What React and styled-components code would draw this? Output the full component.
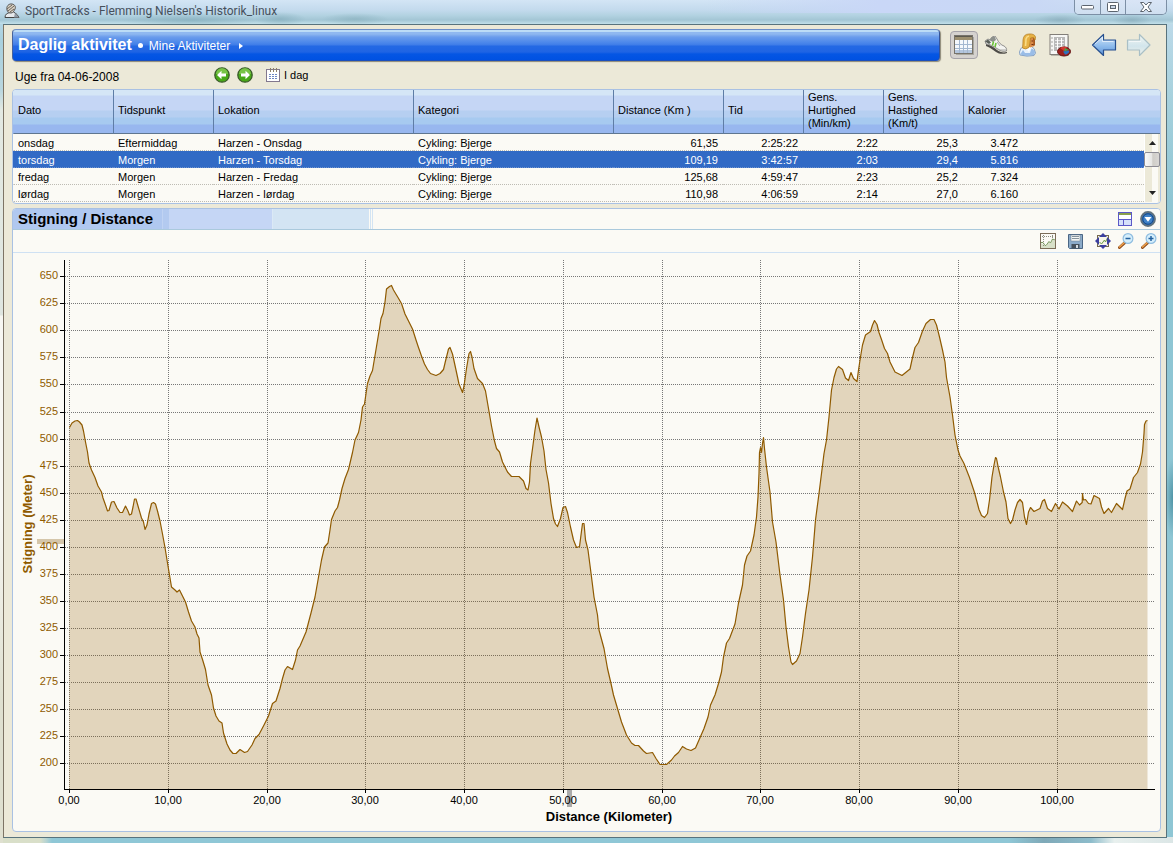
import React from "react";
import styled, { createGlobalStyle } from "styled-components";

const GlobalStyle = createGlobalStyle`
  * { box-sizing: border-box; }
  body {
    margin: 0;
    background: #8fc5d3;
    font-family: "Liberation Sans", Arial, sans-serif;
    font-size: 11px;
    color: #000;
  }
  button { font: inherit; color: inherit; }
  svg { display: block; }
`;

const Window = styled.main`
  display: flex;
  flex-direction: column;
  min-height: 100vh;
  padding: 0 6px 5px 3px;
  background:
    radial-gradient(ellipse 8px 40px at 100% 498px, #4f94a6, transparent),
    linear-gradient(#c3dcec, #a8d0de 40px, #b9d6df 90px, #e3e9e2 110px, #dfe6e0 315px, #f7f7f2 316px, #f7f7f2 515px, #dfe0d0 700px) left / 3px 100% no-repeat,
    linear-gradient(90deg, #d9dfc9 40px, #b8d4d2 46px, #8fc7d6 52px, #8fc7d6 86%, #7fa9b8 89%, #8dbccb 93%, #e8f0ee 95%, #dbe6e6) bottom / 100% 6px no-repeat,
    linear-gradient(#c3dcec, #a9d2de 90px, #8ec6d4 200px);
`;

const TitleBar = styled.header`
  display: flex;
  align-items: flex-start;
  justify-content: space-between;
  height: 24px;
  margin: 0 -6px 0 -3px;
  background:
    radial-gradient(ellipse 26px 7px at 280px 19px, #7fa9b799, transparent),
    radial-gradient(ellipse 70px 7px at 190px 20px, #7fa9b799, transparent),
    radial-gradient(ellipse 34px 6px at 355px 19px, #86aebb99, transparent),
    radial-gradient(ellipse 26px 6px at 1060px 20px, #7fa3b188, transparent),
    radial-gradient(ellipse 20px 6px at 1132px 20px, #7fa3b188, transparent),
    linear-gradient(90deg, transparent 60%, #c9d7f7 75%, #c9d8f5 88%, transparent) top / 100% 13px no-repeat,
    linear-gradient(#d3e5f5, #c3daed 10px, #b4d3e2 15px, #a3c6d5 20px, #c2e0ea);
`;

const TitleText = styled.h1`
  display: flex;
  align-items: center;
  gap: 5px;
  height: 22px;
  margin: 0;
  padding-left: 4px;
  font: 400 12px Roboto, "Noto Sans", sans-serif;
  color: #46505c;
`;

const WindowButtons = styled.div`
  display: flex;
  height: 15px;
  margin-right: 6px;
  border: 1px solid #7c8fa5;
  border-top: 0;
  border-radius: 0 0 5px 5px;
  overflow: hidden;
`;

const WindowButton = styled.button`
  display: grid;
  place-items: center;
  width: ${(p) => p.$width};
  padding: 0;
  border: 0;
  border-left: ${(p) => (p.$first ? "0" : "1px solid #7c8fa5")};
  background: linear-gradient(#d9e5f6, #cfdff0);
`;

const Frame = styled.div`
  flex: 1;
  display: flex;
  flex-direction: column;
  padding: 4px 5px 5px 8px;
  border: 1px solid #58737d;
  border-left-color: #7d7465;
  background: #ece9d8;
`;

const Top = styled.div`
  display: flex;
  align-items: center;
`;

const Banner = styled.div`
  flex: 1;
  display: flex;
  align-items: center;
  height: 32px;
  padding: 0 5px;
  border: 1px solid #3b5fae;
  border-color: #6d8fc8 #34539a #1b4fbd #47639c;
  border-radius: 4px;
  box-shadow: 1px 1px 1px #8c8877;
  background: linear-gradient(#bcdcf6 0 2px, #8fb8f0 2px 4px, #6a9cec 7px, #4a86ea 13px, #3f7ce8 15px, #2469e4 16px, #1f64e4 22px, #0556e4 24px, #0051e2);
  color: #fff;
`;

const BannerTitle = styled.h2`
  margin: 0;
  font-size: 16px;
  line-height: 20px;
`;

const Bullet = styled.span`
  width: 5px;
  height: 5px;
  margin: 0 6px;
  border-radius: 50%;
  background: #fff;
`;

const BannerLink = styled.a`
  display: flex;
  align-items: center;
  gap: 9px;
  padding-top: 2px;
  font-size: 12px;
  line-height: 20px;
  color: #fff;
  text-decoration: none;
`;

const Tools = styled.nav`
  display: flex;
  gap: 4px;
  padding: 0 8px 0 10px;
`;

const ToolPair = styled.div`
  display: flex;
  gap: 7px;
  margin-left: 12px;
`;

const ToolButton = styled.button`
  display: grid;
  place-items: center;
  width: 28px;
  height: 28px;
  padding: 0;
  border: 1px solid ${(p) => (p.$active ? "#a5a2a8" : "transparent")};
  border-radius: 4px;
  background: ${(p) => (p.$active ? "#d5d2cf" : "transparent")};
`;

const WeekBar = styled.div`
  display: flex;
  align-items: center;
  height: 28px;
  padding-left: 3px;
`;

const WeekLabel = styled.span`
  flex: 0 0 199px;
  padding-top: 3px;
  font-size: 12px;
`;

const WeekButton = styled.button`
  display: flex;
  align-items: center;
  gap: 4px;
  margin-right: ${(p) => p.$after || "0"};
  padding: 0;
  border: 0;
  background: none;
`;

const Panel = styled.section`
  border: 1px solid #a9c1e3;
  border-radius: 4px;
  background: #fbfaf5;
  overflow: hidden;
`;

const TablePanel = styled(Panel)`
  margin-bottom: 4px;
  padding-bottom: 1px;
`;

const Table = styled.table`
  width: 100%;
  table-layout: fixed;
  border-collapse: separate;
  border-spacing: 0;
`;

const HeadCell = styled.th`
  height: 44px;
  padding: 0 4px 2px;
  border-left: 1px solid ${(p) => (p.$first ? "transparent" : "#5f7da6")};
  border-bottom: 1px solid #5f7690;
  font-weight: 400;
  line-height: 13px;
  text-align: left;
`;

const HeadRow = styled.tr`
  background: linear-gradient(#d5e6f6 0 5px, #c5d6f5 6px 20px, #b6cff1 21px 27px, #a7caf0 28px 34px, #98b7ef 35px);
`;

const Cell = styled.td`
  height: 17px;
  padding: 2px 5px 0 4px;
  border-left: 1px solid transparent;
  border-bottom: 1px dotted ${(p) => (p.$selected ? "#6f92cf" : "#bdbbb3")};
  background: ${(p) => (p.$selected ? "#316ac5" : "#fbfaf5")};
  color: ${(p) => (p.$selected ? "#fff" : "#000")};
  line-height: 14px;
  text-align: ${(p) => (p.$right ? "right" : "left")};
  white-space: nowrap;
`;

const ScrollCell = styled.td`
  height: 68px;
  padding: 0;
  vertical-align: top;
`;

const ScrollBar = styled.div`
  display: flex;
  flex-direction: column;
  height: 68px;
  background: linear-gradient(90deg, #fff 0 1px, #ece9d8 1px 8px, #fbfaf5 8px 14px, #ece9d8 14px);
`;

const ScrollArrow = styled.button`
  display: grid;
  place-items: center;
  height: 18px;
  padding: 0;
  border: 0;
  background: none;
`;

const ScrollThumb = styled.button`
  height: 15px;
  margin-bottom: auto;
  padding: 0;
  border: 1px solid #8d8c94;
  border-radius: 2px;
  background: linear-gradient(90deg, #fafafa, #e6e6e4 50%, #cfcdc8 55%, #d9d7d4);
`;

const PanelHead = styled.div`
  display: flex;
  align-items: center;
  justify-content: space-between;
  height: 21px;
  padding: 0 4px 0 5px;
  border-bottom: 1px solid #aac9dc;
  background: linear-gradient(90deg, #b0c8f0 149px, #c0d3f3 149px 150px, #b3caf0 150px 156px, #c5d6f5 156px 259px, #dbe9f6 259px 260px, #d3e4f3 260px 356px, #fbfaf5 356px 357px, #d3e4f3 357px 358px, #fbfaf5 358px 359px, #d3e4f3 359px 360px, #fbfaf5 360px);
`;

const PanelTitle = styled.h2`
  margin: 0;
  font-size: 15px;
  line-height: 20px;
`;

const IconGroup = styled.div`
  display: flex;
  align-items: center;
  gap: ${(p) => p.$gap};
`;

const ChartTools = styled.div`
  display: flex;
  justify-content: flex-end;
  gap: 7px;
  height: 23px;
  padding-right: 3px;
  border-bottom: 1px solid #cfe1f3;
`;

const IconButton = styled.button`
  padding: 0;
  border: 0;
  background: none;
`;

const Chart = styled.svg`
  width: 100%;
  height: auto;
  font-size: 11px;
`;

const BROWN = "#8f5a00";

/* ---------- window and navigation icons ---------- */

const AppIcon = () => (
  <svg width="16" height="16" viewBox="0 0 16 16">
    <path d="M1 14.500c0-3 2-4.500 5-5l3-1 4 3 2 3z" fill="#e6e9ec" stroke="#444" strokeWidth="1" />
    <path d="M3 7c-1-4 2-6.500 5-6s4 3 3 5-2 4-4 4-3.500-1-4-3z" fill="#d9d2c6" stroke="#555" strokeWidth="1" />
    <path d="M3 6l5-4M4 8l6-5M6 9l4-3" stroke="#6b6258" strokeWidth="1" />
    <path d="M11 10l4 4.500h-5z" fill="#8f9aa5" />
  </svg>
);

const MinimizeIcon = () => (
  <svg width="13" height="6" viewBox="0 0 13 6"><rect x=".5" y="1.500" width="12" height="3.500" rx="1" fill="#fff" stroke="#5c646e" /></svg>
);
const MaximizeIcon = () => (
  <svg width="12" height="10" viewBox="0 0 12 10">
    <rect x=".5" y=".5" width="11" height="9" rx="1" fill="#fff" stroke="#5c646e" />
    <rect x="3.500" y="3.500" width="5" height="3" fill="#c9d7e8" stroke="#5c646e" />
  </svg>
);
const CloseIcon = () => (
  <svg width="12" height="10" viewBox="0 0 12 10">
    <path d="M.5.5h3.200L6 3 8.300.5h3.200L8 5l3.500 4.500H8.300L6 7 3.700 9.500H.5L4 5z" fill="#fff" stroke="#5c646e" />
  </svg>
);

const CalendarIcon = () => (
  <svg width="20" height="20" viewBox="0 0 20 20">
    <rect x="2" y="2" width="18" height="18" fill="#a9a79f" />
    <rect x=".5" y=".5" width="18" height="18" fill="#f5f8fc" stroke="#77736a" />
    <rect x="1" y="1" width="17" height="4" fill="#9c8f6f" />
    <rect x="1" y="1" width="17" height="1" fill="#5d5a50" />
    <rect x="1" y="15" width="17" height="3" fill="#b4c6de" />
    <path d="M1 9.500h17M1 13.500h17M5.500 5v13M9.500 5v13M13.500 5v13" stroke="#a3b7d0" />
  </svg>
);

const ShoeIcon = () => (
  <svg width="24" height="18" viewBox="0 0 24 18">
    <path d="M2 8c4 1 8 3 11 6 3 2 6 3 10 2v1c-4 1.500-8 1-11-1-4-3-7-5-10-6z" fill="#4d4b47" />
    <path d="M1 5l3-2 2 1 2-3 3-1 2 3c2 4 4 6 7 7 2 1 3 3 2.500 5-3 1-6 0-9-2C9 10 6 8 2 8z" fill="#f4f4f1" stroke="#777" strokeWidth=".8" />
    <path d="M5 4l3-3 3 0 1 3-3 2z" fill="#8d918c" />
    <path d="M1 5.500l3-2 3 3-2 1.500z" fill="#5a605a" />
    <path d="M9.500 5.500l-1 4M12 7l-1 4" stroke="#69c435" strokeWidth="1.600" />
    <path d="M13 6l3 4M12 12l4 2 6 0" fill="none" stroke="#a9a9a4" />
  </svg>
);

const PersonIcon = () => (
  <svg width="20" height="24" viewBox="0 0 20 24">
    <path d="M2 22L1.500 19Q2 14.500 6 13.500L13 13Q17 15 17.500 20L16 22.500Q9 24 2 22Z" fill="#e9f2fb" stroke="#88a3c4" />
    <path d="M2.500 21Q4 22.500 9 22.800L16 22L17 19Q15 15.500 13.500 15.500L12 20L7 20L5 17Z" fill="#7fabe0" opacity=".75" />
    <path d="M7 14L11 19L13 14Z" fill="#fff" />
    <path d="M10 4L16.500 4L17 8.500L16 13L12.500 14.500L9 12Z" fill="#d98a48" />
    <path d="M15 5L17 5L17 12L15.500 13.500Z" fill="#a9581f" />
    <path d="M4.500 15Q5 11 5 7Q5.500 1 11 1Q16.500 .5 17.500 4Q17.500 6 17 7L15.500 4.500L12.500 5Q12 11 11 14.500Q7.500 17 4.500 15Z" fill="#e6b145" stroke="#b07a1e" strokeWidth=".7" />
    <path d="M7.500 13Q8 8 8 6Q8.500 3.500 11 3" fill="none" stroke="#f9dc86" strokeWidth="1.600" />
    <path d="M13.500 8H15M13.500 11.500H15.500" stroke="#71310f" />
  </svg>
);

const ReportIcon = () => (
  <svg width="22" height="24" viewBox="0 0 22 24">
    <rect x="2" y="3" width="18" height="20" fill="#bbb8ab" />
    <rect x="1" y="1.500" width="18" height="20" fill="#f7f7f5" stroke="#827e78" />
    <rect x="5" y="4" width="11" height="14" fill="#b9b9b9" />
    <path d="M6 7.500h9M6 10.500h9M6 13.500h9" stroke="#e9e9e9" />
    <path d="M8.500 5v13M12.500 5v13" stroke="#fff" />
    <path d="M2.500 5h1M2.500 9h1M2.500 13h1M2.500 17h1" stroke="#555" />
    <ellipse cx="15" cy="18.500" rx="6.500" ry="4.500" fill="#9e1f1d" stroke="#641211" />
    <path d="M15 18l-4-3c2-1.500 5-1.500 7-1z" fill="#d43a31" />
    <path d="M15 18.500l1-3.500 4 2z" fill="#4ba34c" />
    <path d="M14 18.500l6-1c1 2-2 4-4 4z" fill="#2d71bd" />
  </svg>
);

const Arrow = ({ forward }) => (
  <svg width="26" height="24" viewBox="0 0 26 24">
    <defs>
      <linearGradient id={forward ? "fwd" : "back"} x1="0" y1="0" x2="0" y2="1">
        <stop offset="0" stopColor={forward ? "#f3f7f2" : "#d8ebfb"} />
        <stop offset=".55" stopColor={forward ? "#d2e5ec" : "#8fbcec"} />
        <stop offset="1" stopColor={forward ? "#edf0e8" : "#5c93d8"} />
      </linearGradient>
    </defs>
    <path
      d={forward ? "M24 12L13.500 1.500V7H1.500v10h12v5.500z" : "M1.500 12L12.500 1.500V7h12v10h-12v5.500z"}
      fill={forward ? "url(#fwd)" : "url(#back)"}
      stroke={forward ? "#a9bfc6" : "#27508f"}
      strokeWidth="1.200"
      strokeLinejoin="round"
    />
    <path d={forward ? "M3 8.500h12" : "M4 11L11.500 4v4.500h11"} fill="none" stroke="#fff" opacity=".6" />
  </svg>
);

const GreenArrow = ({ forward }) => (
  <svg width="16" height="16" viewBox="0 0 16 16">
    <circle cx="8" cy="8" r="7.200" fill="#48a818" stroke="#3a5b2b" strokeWidth="1.300" />
    <path d="M2 7a6 6 0 0 1 12 0z" fill="#8cd05a" opacity=".7" />
    <path d={forward ? "M13 8L8.500 3.800V6.500H4v3h4.500v2.700z" : "M3 8l4.500-4.200V6.500H12v3H7.500v2.700z"} fill="#fff" />
  </svg>
);

const DayIcon = () => (
  <svg width="14" height="14" viewBox="0 0 14 14">
    <rect x=".5" y="1.500" width="13" height="12" fill="#fff" stroke="#82788e" />
    <path d="M4.500 0v4M7.500 0v4M10.500 0v4" stroke="#8d8168" />
    <path d="M3 6.500h9M3 8.500h9M3 10.500h9" stroke="#6f88c4" strokeDasharray="2 1" />
  </svg>
);

const Triangle = ({ down }) => (
  <svg width="7" height="4" viewBox="0 0 7 4"><path d={down ? "M0 0h7L3.500 4z" : "M0 4h7L3.500 0z"} fill="#222" /></svg>
);

/* ---------- chart panel icons ---------- */

const LayoutIcon = () => (
  <svg width="14" height="14" viewBox="0 0 14 14">
    <rect x=".5" y=".5" width="13" height="13" fill="#fff" stroke="#5b58c8" />
    <rect x="1" y="1" width="12" height="2" fill="#8aa04c" />
    <rect x="1" y="8" width="12" height="5" fill="#d5e0fa" />
    <path d="M1 7.500h12M5.500 8v5" stroke="#5b58c8" />
  </svg>
);
const MenuIcon = () => (
  <svg width="16" height="16" viewBox="0 0 16 16">
    <circle cx="8" cy="8" r="7" fill="#2d6eb2" stroke="#60717d" strokeWidth="1.800" />
    <circle cx="8" cy="8" r="5.200" fill="#3f82c8" stroke="#16498c" />
    <path d="M4.500 6h7L8 10.800z" fill="#fff" />
  </svg>
);
const GraphIcon = () => (
  <svg width="16" height="16" viewBox="0 0 16 16">
    <path d="M1 10l3 2 2 1 3-5 2 2 2-4 2 2v7H1z" fill="#d8e0c8" />
    <rect x=".5" y=".5" width="15" height="15" fill="none" stroke="#7b6c58" />
    <path d="M2 3.500h12M3.500 2v12M12.500 2v6" stroke="#8d8d80" strokeDasharray="1 1" />
    <path d="M1 9.500l2 0 2 3 1 0 3-4 1.500 1.500 2-4 2.500 1" fill="none" stroke="#7d9b63" />
  </svg>
);
const SaveIcon = () => (
  <svg width="15" height="15" viewBox="0 0 15 15">
    <path d="M.5.5h14v14h-13l-1-1z" fill="#8cabc9" stroke="#4a6685" />
    <rect x="3" y="1" width="9" height="6" fill="#f4f6f4" stroke="#6c7c8c" strokeWidth=".5" />
    <path d="M4 2.500h7M4 4.500h7" stroke="#87939c" />
    <rect x="3.500" y="10" width="8" height="4.500" fill="#47525d" />
    <rect x="8" y="11" width="2" height="3" fill="#d7dde2" />
  </svg>
);
const FitIcon = () => (
  <svg width="16" height="16" viewBox="0 0 16 16">
    <rect x="2.500" y="2.500" width="11" height="11" fill="#f7f5ea" stroke="#74684c" />
    <path d="M4.500 9l2 2 3-4 1 2 2-4" fill="none" stroke="#6c9a4a" />
    <path d="M8 0l4 4H4zM8 16l4-4H4zM0 8l4-4v8zM16 8l-4-4v8z" fill="#3b3fa0" />
  </svg>
);
const ZoomIcon = ({ plus }) => (
  <svg width="16" height="16" viewBox="0 0 16 16">
    <path d="M1.500 14.500L7 9.500" stroke="#8d4b1c" strokeWidth="3" strokeLinecap="round" />
    <path d="M1.500 14L7 9" stroke="#efa24b" strokeWidth="1.500" strokeLinecap="round" />
    <circle cx="10" cy="5.500" r="4.900" fill="#d6effc" stroke="#8fbde0" strokeWidth="1.200" />
    <path d={plus ? "M7.500 5.500h5M10 3v5" : "M7.500 5.500h5"} stroke="#2563a0" strokeWidth="1.500" />
  </svg>
);

/* ---------- data ---------- */

const columns = [
  { label: "Dato", width: 100 },
  { label: "Tidspunkt", width: 100 },
  { label: "Lokation", width: 200 },
  { label: "Kategori", width: 200 },
  { label: "Distance (Km )", width: 110, right: true },
  { label: "Tid", width: 80, right: true },
  { label: "Gens. Hurtighed (Min/km)", width: 80, right: true },
  { label: "Gens. Hastighed (Km/t)", width: 80, right: true },
  { label: "Kalorier", width: 60, right: true },
];

const rows = [
  ["onsdag", "Eftermiddag", "Harzen - Onsdag", "Cykling: Bjerge", "61,35", "2:25:22", "2:22", "25,3", "3.472"],
  ["torsdag", "Morgen", "Harzen - Torsdag", "Cykling: Bjerge", "109,19", "3:42:57", "2:03", "29,4", "5.816"],
  ["fredag", "Morgen", "Harzen - Fredag", "Cykling: Bjerge", "125,68", "4:59:47", "2:23", "25,2", "7.324"],
  ["lørdag", "Morgen", "Harzen - lørdag", "Cykling: Bjerge", "110,98", "4:06:59", "2:14", "27,0", "6.160"],
];

const profile = `69.5,427.5 72,423 75,421 77.5,420.5 79.5,422 82,425 83.5,431 85.5,442 87.5,452 89,463 91.5,470 95,477.5
98,486 101.5,492 103,498 105.5,505 107.5,511 109,510.5 111.5,502 114,501.5 117,508 120,512.5 122.5,512.5 125.5,506 128,511
129.5,515 131.5,514 133,507 134.5,499 136,499 138,506 141.5,518 143.5,522 145,529.5 147,525 149,514 151.5,503.5 153.5,502.5
155.5,504 157.5,511 160,521 162.5,534 165,547.5 167,560 169,572 171.5,587 175,590 177,592 179.5,590 182.5,596 185.5,602
188.5,612 191.5,621 195,627 197,634 199,638 200,652 202.5,659.5 205.5,669.5 208,685 211.5,695 213.5,708 216,716 219,721
222,723 223.5,733 227,744 230,750 233,753.5 236,753.5 240,749.5 244.5,752.5 247.5,751.5 252,745 255,738.5 259,734.5 264,725
268.5,716 272.5,703.5 276,701 280,688.5 282.5,678.5 285,670 287.5,666.5 290,668 292.5,669.5 295.5,660 297.5,650 300,646
306,632 311,613 315,597 318,580 321.5,560 324.5,547 328,543 330,530 331.5,519.5 335,511 337.5,507.5 339.5,500 342,488.5
345,478.5 348.5,469.5 352.5,452.5 355,440 358.5,432.5 361,420 362.5,407 364.5,404 367.5,383.5 370,376 372.5,370.5 374.5,358.5
377,343.5 379.5,328.5 381,318.5 383,313.5 385,302 386.5,289 389.5,286.5 391.5,285.5 393.5,290 398,297.500 401.5,303.5 405,314
408.5,321 412.5,329 416,340 418.5,347.5 421.5,356 424.5,364 427.5,369.5 430.5,373.5 436,375.5 440,373.5 443.5,369.5 445.5,361
448.5,349 450,347.5 452.5,354 456,370 459,384 462.5,392.5 464,386 466.5,368.5 469,353.5 470.5,351.5 472,357 474,368.5
477.5,378.5 482.5,383.5 485.5,391 488.5,408.5 491.5,426 494.5,441 496.5,448.5 499.5,452 502.5,462 507.5,472 511.5,476.5
519,476.5 523.5,481 526,488.5 528,490 529.5,482 530.5,463.5 533,445 535,430 537,418 539,427 541.5,437 544,451 546,469.5
548.5,483 551,503.5 553.5,518.5 555.5,524 557.5,526.5 560.5,518.5 563,507.5 565.5,506.5 567.5,512.5 570.5,527 573.5,540
576.5,547.5 579.5,546.5 581,535 582.5,523.5 584,523.5 585.5,540 588,550 591.5,577 594,597 597.5,615 599,630 604,648.5
607.5,668.5 611,683.5 613.5,695 617.5,708.5 621.5,722 626.5,735 631.5,743 635,745.5 638.5,745.5 643.5,751 646.5,753.5
652.5,752.5 656,758.5 660,764.5 666.5,764.5 671.5,760 674.5,756 678.5,752.5 682.5,746.5 686.5,749 691,750.5 695.5,748 699,740
704,728.5 708,717 710.5,705 715,695 718.5,683.5 721.5,672 723.5,657 726.5,643 729.5,638.5 735,624 738.5,603 742.5,585
744.5,565 747,556 750.5,551 754,535 756.5,517 758,497 759,473.5 759.5,452.5 760.5,447.5 761.5,452.5 762.5,443.5 763.5,437.5
764.5,448.5 766.5,467 770,492 772.5,522 776,542 780,575 783.5,600 786,627 788.5,647 791,662 792.5,664.5 796.5,661 800,653.5
802.5,637 805.5,613.5 809,590 812.5,557 815.5,520 819,493.5 821.5,473.5 824,453.5 826.5,440 829,417 831.5,390 834,377.5
836.5,369 838.5,366.5 842.5,369.5 845.5,378 848.5,380.5 851,372.5 853.5,378.5 857,381.5 858.5,370 860.5,357 862.5,345
865.5,335 870.5,331.5 872.5,325 874.5,320.5 877,324.5 879,332.5 881.5,339.5 884.5,348.5 887.5,353.5 890,362 895,372 902,375.5
910,369 912.5,357.5 915,347.5 918.5,342.5 922.5,331 926,323.5 930.5,319.5 934,319.5 936.5,325 939.5,337 942.5,350 945,362
946.5,377.5 950,397 952.5,415 955,435 958,450 960,456 964,463.5 969.5,477.5 974.5,492.5 979,509.5 981.5,515.5 984.5,517.5
987.5,513.5 989.5,500 992,477 994,465 995.5,457.5 996.5,458.5 998.5,468.5 1000.5,477 1003.5,492 1006,502 1008,518.5
1010.5,523.5 1012.5,520 1015,510 1017.5,502.5 1020,499.5 1022.5,502.5 1024.5,517 1026.5,524.5 1028.5,512 1030.5,507.5
1034,511.5 1040,508.5 1042.5,501 1044.5,499.5 1047.5,508.5 1051.5,511.5 1055.5,503.5 1059,509 1062.5,502 1067.5,506
1072.5,511.5 1076.5,501 1079.5,505 1082.2,502.5 1082.5,493.5 1083.5,500 1085.5,499.5 1088.5,503.5 1091,504 1094,495.5
1099.5,498.5 1101.5,507 1104,513.5 1108.5,508.5 1111.5,512.5 1116.5,503.5 1122.5,509.5 1125,498.5 1127,491 1130,489
1133.5,477.5 1137.5,472.5 1140.5,464 1142.5,452 1144,433.5 1144.5,424.5 1146,421 1147.5,420.5`;

const yTicks = Array.from({ length: 19 }, (_, i) => ({
  value: 650 - i * 25,
  y: Math.floor(276.71 + i * 27.06) + 0.5,
}));
const xTicks = Array.from({ length: 11 }, (_, i) => ({
  label: `${i * 10},00`,
  x: Math.floor(69.5 + i * 98.76) + 0.5,
}));

function ElevationChart() {
  return (
    <Chart viewBox="13 253 1147 578" role="img" aria-label="Stigning / Distance">
      <g stroke="#777" strokeDasharray="1 1" shapeRendering="crispEdges">
        {yTicks.map((t) => <line key={t.value} x1="65" x2="1154" y1={t.y} y2={t.y} />)}
        {xTicks.map((t) => <line key={t.label} x1={t.x} x2={t.x} y1="260" y2="789" />)}
      </g>
      <polygon points={`69,789 ${profile} 1147.5,789`} fill={BROWN} fillOpacity=".23" />
      <polyline points={profile} fill="none" stroke={BROWN} strokeWidth="1.200" strokeLinejoin="round" />
      <rect x="37" y="539" width="27" height="5" fill="#d5c6aa" />
      <rect x="567" y="790" width="5" height="17" fill="#ababab" />
      <g stroke="#000" shapeRendering="crispEdges">
        <path d="M64.500 260V789.500H1155" fill="none" />
        {yTicks.map((t) => <line key={t.value} x1="60" x2="64" y1={t.y} y2={t.y} />)}
        {xTicks.map((t) => <line key={t.label} x1={t.x} x2={t.x} y1="790" y2="793" />)}
      </g>
      <g fill={BROWN} textAnchor="end">
        {yTicks.map((t) => <text key={t.value} x="58" y={t.y + 2.5}>{t.value}</text>)}
      </g>
      <g textAnchor="middle">
        {xTicks.map((t) => <text key={t.label} x={t.x - 0.5} y="804">{t.label}</text>)}
      </g>
      <g fontSize="13" fontWeight="700" textAnchor="middle">
        <text x="609" y="821">Distance (Kilometer)</text>
        <text transform="translate(32 524) rotate(-90)" fill={BROWN}>Stigning (Meter)</text>
      </g>
    </Chart>
  );
}

function ActivityTable() {
  return (
    <TablePanel>
      <Table>
        <colgroup>
          {columns.map((c) => <col key={c.label} width={c.width} />)}
          <col />
          <col width="16" />
        </colgroup>
        <thead>
          <HeadRow>
            {columns.map((c, i) => <HeadCell key={c.label} scope="col" $first={i === 0}>{c.label}</HeadCell>)}
            <HeadCell as="td" colSpan={2} />
          </HeadRow>
        </thead>
        <tbody>
          {rows.map((row, r) => (
            <tr key={row[0]}>
              {row.map((value, i) => (
                <Cell key={columns[i].label} $selected={r === 1} $right={columns[i].right}>{value}</Cell>
              ))}
              <Cell $selected={r === 1} />
              {r === 0 && (
                <ScrollCell rowSpan={rows.length}>
                  <ScrollBar>
                    <ScrollArrow aria-label="Op"><Triangle /></ScrollArrow>
                    <ScrollThumb aria-label="Rul" />
                    <ScrollArrow aria-label="Ned"><Triangle down /></ScrollArrow>
                  </ScrollBar>
                </ScrollCell>
              )}
            </tr>
          ))}
        </tbody>
      </Table>
    </TablePanel>
  );
}

export default function App() {
  return (
    <Window>
      <GlobalStyle />
      <TitleBar>
        <TitleText><AppIcon />SportTracks - Flemming Nielsen's Historik_linux</TitleText>
        <WindowButtons>
          <WindowButton $first $width="25px" aria-label="Minimer"><MinimizeIcon /></WindowButton>
          <WindowButton $width="25px" aria-label="Maksimer"><MaximizeIcon /></WindowButton>
          <WindowButton $width="41px" aria-label="Luk"><CloseIcon /></WindowButton>
        </WindowButtons>
      </TitleBar>
      <Frame>
        <Top>
          <Banner>
            <BannerTitle>Daglig aktivitet</BannerTitle>
            <Bullet />
            <BannerLink href="#aktiviteter">
              Mine Aktiviteter
              <svg width="4" height="6" viewBox="0 0 4 6"><path d="M0 0l4 3-4 3z" fill="#fff" /></svg>
            </BannerLink>
          </Banner>
          <Tools>
            <ToolButton $active aria-label="Kalender"><CalendarIcon /></ToolButton>
            <ToolButton aria-label="Udstyr"><ShoeIcon /></ToolButton>
            <ToolButton aria-label="Atlet"><PersonIcon /></ToolButton>
            <ToolButton aria-label="Rapport"><ReportIcon /></ToolButton>
            <ToolPair>
              <ToolButton aria-label="Tilbage"><Arrow /></ToolButton>
              <ToolButton aria-label="Frem"><Arrow forward /></ToolButton>
            </ToolPair>
          </Tools>
        </Top>
        <WeekBar>
          <WeekLabel>Uge fra 04-06-2008</WeekLabel>
          <WeekButton $after="7px" aria-label="Forrige uge"><GreenArrow /></WeekButton>
          <WeekButton $after="13px" aria-label="Næste uge"><GreenArrow forward /></WeekButton>
          <WeekButton><DayIcon />I dag</WeekButton>
        </WeekBar>
        <ActivityTable />
        <Panel>
          <PanelHead>
            <PanelTitle>Stigning / Distance</PanelTitle>
            <IconGroup $gap="8px">
              <IconButton aria-label="Layout"><LayoutIcon /></IconButton>
              <IconButton aria-label="Menu"><MenuIcon /></IconButton>
            </IconGroup>
          </PanelHead>
          <ChartTools>
            <IconGroup $gap="12px">
              <IconButton aria-label="Graf"><GraphIcon /></IconButton>
              <IconButton aria-label="Gem"><SaveIcon /></IconButton>
              <IconButton aria-label="Tilpas"><FitIcon /></IconButton>
            </IconGroup>
            <IconGroup $gap="7px">
              <IconButton aria-label="Zoom ud"><ZoomIcon /></IconButton>
              <IconButton aria-label="Zoom ind"><ZoomIcon plus /></IconButton>
            </IconGroup>
          </ChartTools>
          <ElevationChart />
        </Panel>
      </Frame>
    </Window>
  );
}
